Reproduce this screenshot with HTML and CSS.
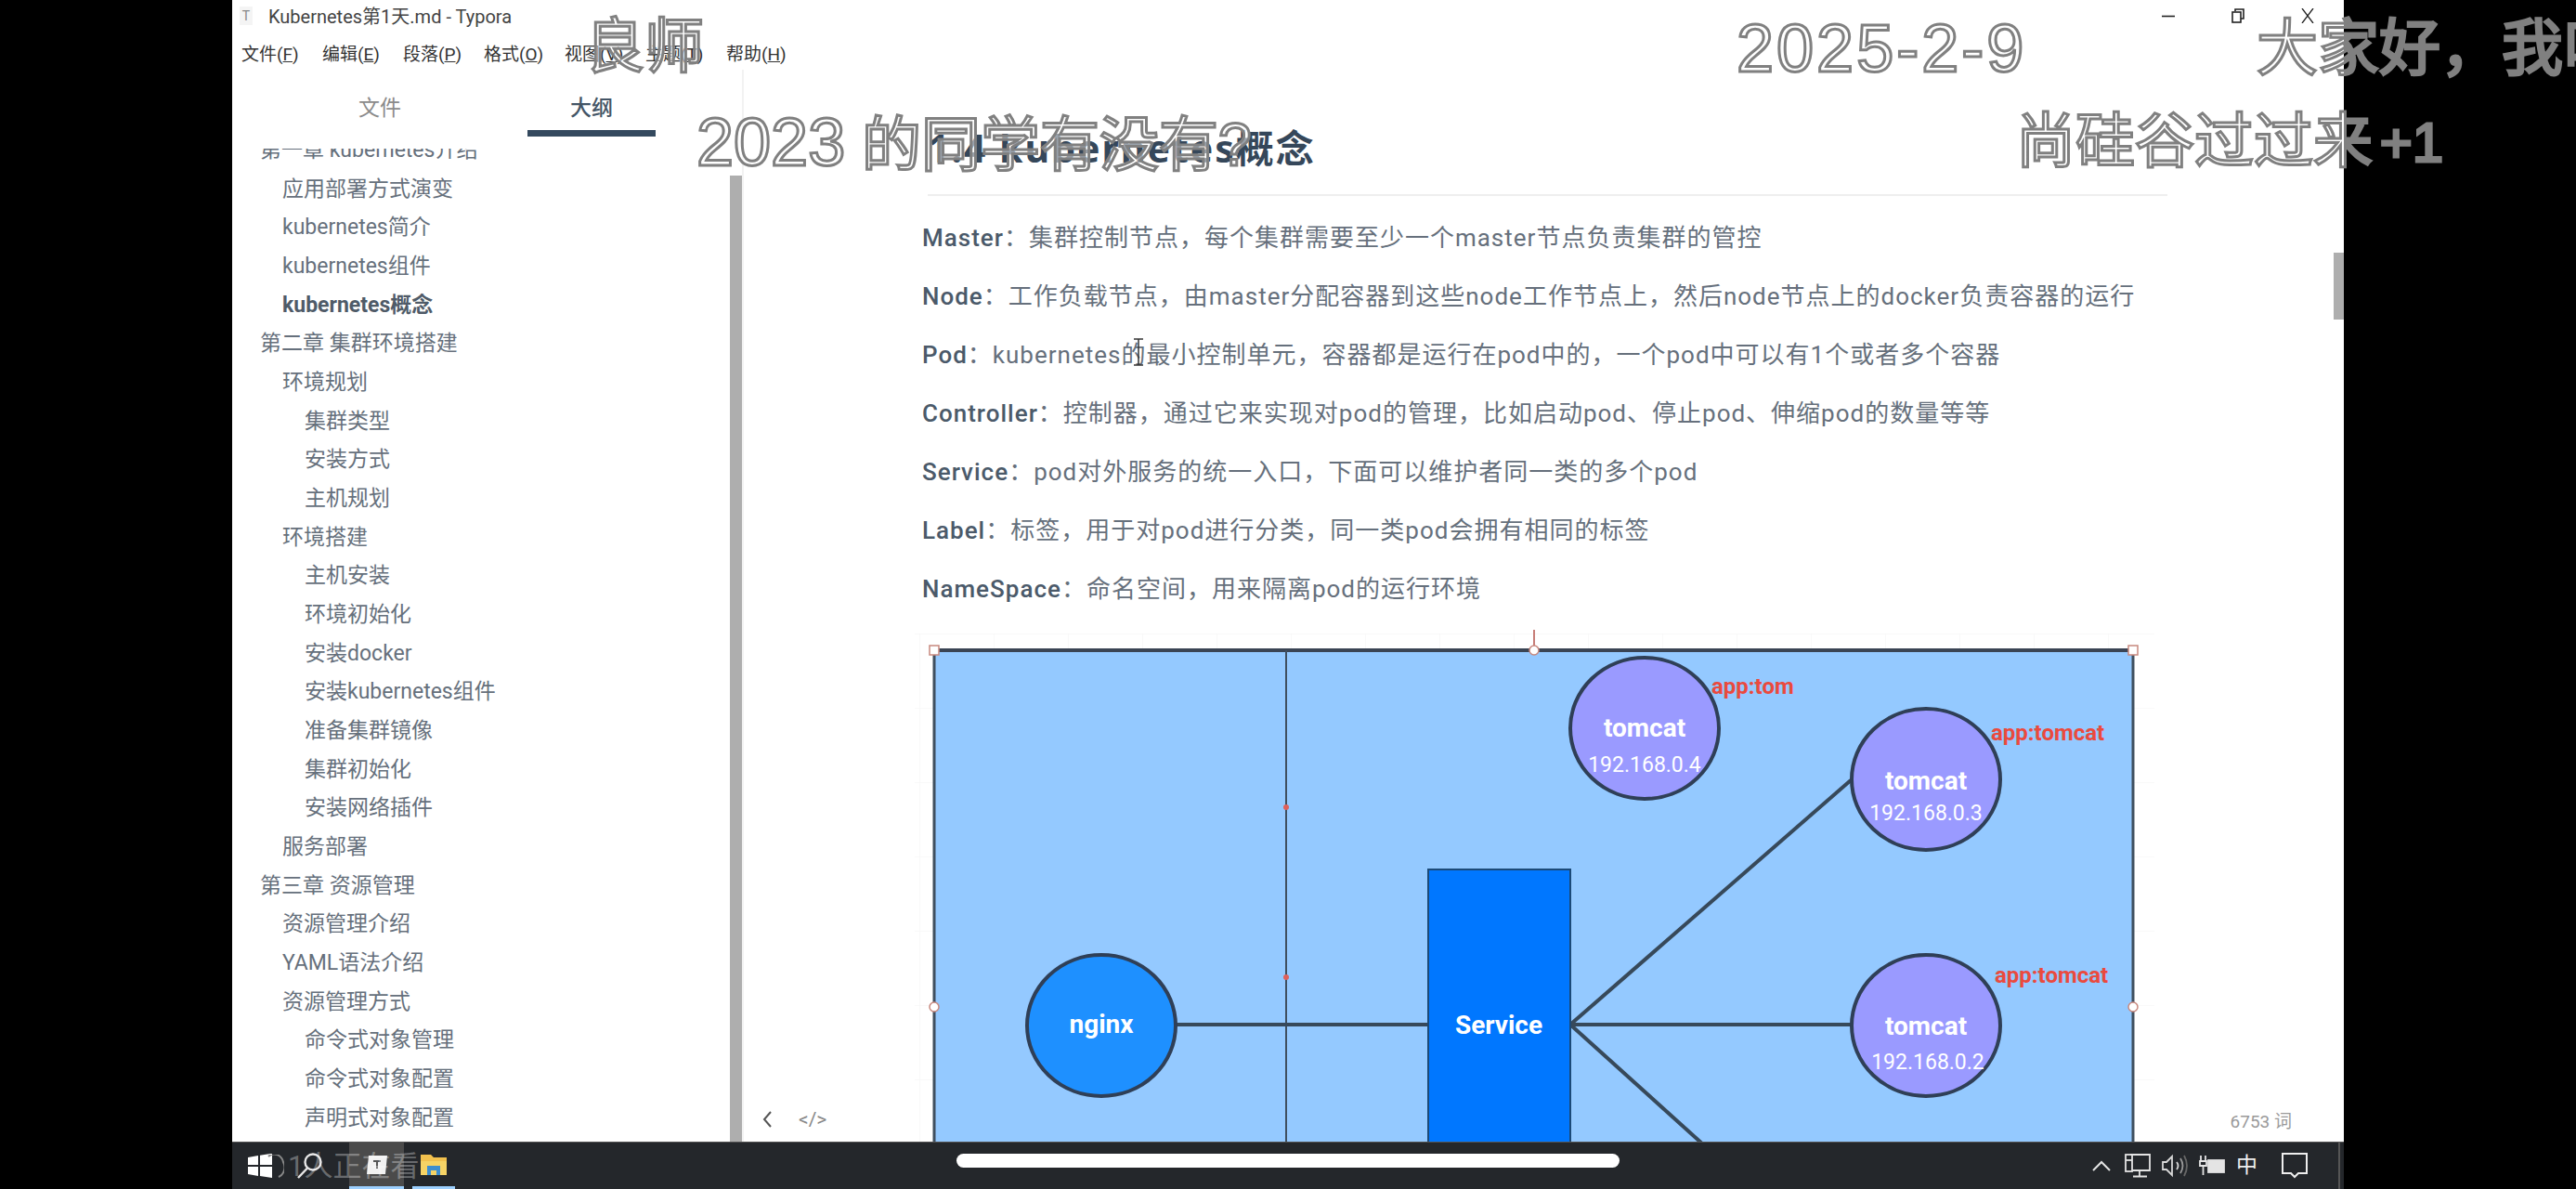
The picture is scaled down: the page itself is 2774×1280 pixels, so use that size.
FILE: index.html
```html
<!DOCTYPE html>
<html lang="zh-CN">
<head>
  <meta charset="UTF-8">
  <title>Kubernetes第1天.md - Typora</title>
  <link rel="stylesheet" href="styles.css">
</head>
<body>
  <div class="window">
    <div class="titlebar">
      <span class="app-icon">T</span>
      <span class="title">Kubernetes第1天.md - Typora</span>
      <div class="win-controls">
        <svg width="14" height="14" viewBox="0 0 14 14"><path d="M0 7.5h14" stroke="#222" stroke-width="1.6"/></svg>
        <svg width="14" height="16" viewBox="0 0 14 16" fill="none" stroke="#222" stroke-width="1.6"><path d="M4 3V1h9v10h-3"/><rect x="1" y="4" width="9" height="11"/></svg>
        <svg width="14" height="16" viewBox="0 0 14 16" fill="none" stroke="#222" stroke-width="1.3"><path d="M1 0l12 16M13 0L1 16"/></svg>
      </div>
    </div>
    <div class="menubar">
      <span>文件(<u>F</u>)</span>
      <span>编辑(<u>E</u>)</span>
      <span>段落(<u>P</u>)</span>
      <span>格式(<u>O</u>)</span>
      <span>视图(<u>V</u>)</span>
      <span>主题(<u>T</u>)</span>
      <span>帮助(<u>H</u>)</span>
    </div>

    <div class="main">
      <aside class="sidebar">
        <div class="tabs">
          <div class="tab">文件</div>
          <div class="tab active">大纲</div>
        </div>
        <div class="toc">
          <ul class="toc-list">
            <li class="l1">第一章 kubernetes介绍</li>
            <li class="l2">应用部署方式演变</li>
            <li class="l2">kubernetes简介</li>
            <li class="l2">kubernetes组件</li>
            <li class="l2 current">kubernetes概念</li>
            <li class="l1">第二章 集群环境搭建</li>
            <li class="l2">环境规划</li>
            <li class="l3">集群类型</li>
            <li class="l3">安装方式</li>
            <li class="l3">主机规划</li>
            <li class="l2">环境搭建</li>
            <li class="l3">主机安装</li>
            <li class="l3">环境初始化</li>
            <li class="l3">安装docker</li>
            <li class="l3">安装kubernetes组件</li>
            <li class="l3">准备集群镜像</li>
            <li class="l3">集群初始化</li>
            <li class="l3">安装网络插件</li>
            <li class="l2">服务部署</li>
            <li class="l1">第三章 资源管理</li>
            <li class="l2">资源管理介绍</li>
            <li class="l2">YAML语法介绍</li>
            <li class="l2">资源管理方式</li>
            <li class="l3">命令式对象管理</li>
            <li class="l3">命令式对象配置</li>
            <li class="l3">声明式对象配置</li>
          </ul>
        </div>
        <div class="side-scroll"></div>
      </aside>

      <section class="editor">
        <h2 class="doc-heading">1.4 kubernetes概念</h2>
        <p><b>Master</b>：集群控制节点，每个集群需要至少一个master节点负责集群的管控</p>
        <p><b>Node</b>：工作负载节点，由master分配容器到这些node工作节点上，然后node节点上的docker负责容器的运行</p>
        <p><b>Pod</b>：kubernetes的最小控制单元，容器都是运行在pod中的，一个pod中可以有1个或者多个容器</p>
        <p><b>Controller</b>：控制器，通过它来实现对pod的管理，比如启动pod、停止pod、伸缩pod的数量等等</p>
        <p><b>Service</b>：pod对外服务的统一入口，下面可以维护者同一类的多个pod</p>
        <p><b>Label</b>：标签，用于对pod进行分类，同一类pod会拥有相同的标签</p>
        <p><b>NameSpace</b>：命名空间，用来隔离pod的运行环境</p>

        <!-- viewBox uses page coordinates -->
        <svg class="diagram" width="1360" height="560" viewBox="980 670 1360 560">
          <defs>
            <pattern id="grid" x="990" y="680" width="80" height="80" patternUnits="userSpaceOnUse">
              <path d="M80 0H0V80" fill="none" stroke="#f3f3f3" stroke-width="1"/>
            </pattern>
          </defs>
          <rect x="985" y="680" width="1335" height="550" fill="url(#grid)"/>
          <rect class="frame" x="1006" y="698" width="1291" height="540"/>
          <path class="top-edge" d="M1006 698H2297"/>
          <path class="thin" d="M1385 698V1230"/>
          <path class="link" d="M1266 1101H1538M1691 1101H1993M1691 1101L1993 838M1691 1101L1834 1230"/>
          <rect class="service" x="1538" y="934" width="153" height="310"/>
          <ellipse class="node" cx="1771" cy="782" rx="80" ry="76"/>
          <ellipse class="node" cx="2074" cy="837" rx="80" ry="76"/>
          <ellipse class="node" cx="2074" cy="1102" rx="80" ry="76"/>
          <ellipse class="node nginx" cx="1186" cy="1102" rx="80" ry="76"/>

          <text class="name" x="1771" y="791">tomcat</text>
          <text class="ip" x="1771" y="829">192.168.0.4</text>
          <text class="name" x="2074" y="848">tomcat</text>
          <text class="ip" x="2074" y="881">192.168.0.3</text>
          <text class="name" x="2074" y="1112">tomcat</text>
          <text class="ip" x="2076" y="1149">192.168.0.2</text>
          <text class="name" x="1186" y="1110">nginx</text>
          <text class="name" x="1614" y="1111">Service</text>
          <text class="tag" x="1843" y="745">app:tom</text>
          <text class="tag" x="2144" y="795">app:tomcat</text>
          <text class="tag" x="2148" y="1056">app:tomcat</text>

          <path d="M1652 676V698" stroke="#b5524a" stroke-width="1.5"/>
          <rect class="handle" x="1001" y="693" width="10" height="10"/>
          <rect class="handle" x="2292" y="693" width="10" height="10"/>
          <ellipse class="handle" cx="1652" cy="698" rx="5" ry="5"/>
          <ellipse class="handle" cx="1006" cy="1082" rx="5" ry="5"/>
          <ellipse class="handle" cx="2297" cy="1082" rx="5" ry="5"/>
          <circle class="dot" cx="1385" cy="867" r="3"/>
          <circle class="dot" cx="1385" cy="1050" r="3"/>
        </svg>

        <div class="editor-foot">
          <div class="foot-left">
            <svg width="12" height="18" viewBox="0 0 12 18" fill="none" stroke="#555" stroke-width="2"><path d="M10 1L3 9l7 8"/></svg>
            <span class="code-toggle">&lt;/&gt;</span>
          </div>
          <span class="word-count">6753 词</span>
        </div>
        <div class="doc-scroll"></div>
      </section>
    </div>

    <div class="taskbar">
      <div class="start">
        <svg width="26" height="26" viewBox="0 0 26 26" fill="#fff"><path d="M0 4l11-2v10H0zM13 1.700l13-2V12H13zM0 14h11v10L0 22zM13 14h13v12l-13-2z"/></svg>
        <svg class="search" width="28" height="28" viewBox="0 0 28 28" fill="none" stroke="#e8e8e8" stroke-width="2.400"><circle cx="18" cy="10" r="8.500"/><path d="M12 16.500L2 27"/></svg>
      </div>
      <div class="task-btn active">
        <svg width="24" height="22" viewBox="0 0 24 22"><path d="M3 1h20l-2 20H1z" fill="#f1f1f1"/><path d="M8 7h8M12 7v8" stroke="#555" stroke-width="2" fill="none"/></svg>
      </div>
      <div class="task-btn folder">
        <svg width="28" height="26" viewBox="0 0 28 26"><path d="M0 2h11l3 3h14v6H0z" fill="#f2c14e"/><path d="M0 9h28v15H0z" fill="#f6d365"/><path d="M7 14h14v10h-4v-5h-6v5H7z" fill="#3d8ed0"/></svg>
      </div>
      <div class="tray">
        <svg class="chevron" width="20" height="12" viewBox="0 0 20 12" fill="none" stroke="#e4e4e4" stroke-width="2"><path d="M1 11l9-9 9 9"/></svg>
        <svg width="28" height="26" viewBox="0 0 28 26" fill="none" stroke="#e4e4e4" stroke-width="1.800"><path d="M6 1h21v17H8M16 18v6M9 24.500h15"/><rect x="1" y="1" width="7" height="18"/><path d="M1 7h7"/></svg>
        <svg width="28" height="26" viewBox="0 0 28 26" fill="none" stroke="#d8d8d8" stroke-width="1.800"><path d="M1 9h4l6-6v20l-6-6H1z"/><path d="M16 9q3 4 0 8"/><path d="M20 5q5 8 0 16" stroke="#999"/><path d="M24 2q6 11 0 22" stroke="#666"/></svg>
        <svg width="28" height="24" viewBox="0 0 28 24" fill="none" stroke="#e4e4e4" stroke-width="1.800"><path d="M2 1v6M7 1v6M1 7h7v5H1zM4.500 12v10"/><rect x="10" y="6" width="17" height="13" fill="#e4e4e4"/></svg>
        <span class="ime">中</span>
        <svg class="notify" width="28" height="28" viewBox="0 0 28 28" fill="none" stroke="#eee" stroke-width="2"><path d="M1 1h26v21h-9l-4 4-4-4H1z"/></svg>
        <div class="tray-edge"></div>
      </div>
    </div>
  </div>

  <!-- live stream overlays -->
  <div class="danmu d-teacher">良师</div>
  <div class="danmu d-year"><span class="digits">2023</span> 的同学有没有?</div>
  <div class="danmu d-date"><span class="digits">2025-2-9</span></div>
  <div class="danmu d-hello">大家好，我叫</div>
  <div class="danmu d-plus">尚硅谷过过来 <span class="digits">+1</span></div>

  <div class="watching">
    <svg width="18" height="26" viewBox="0 0 18 26" fill="none" stroke="#888" stroke-width="2"><path d="M1 2a10 11 0 0 1 16 6 10 11 0 0 1-5 16"/></svg>
    <span>1人正在看</span>
  </div>
  <div class="home-pill"></div>
  <svg class="cursor" width="14" height="30" viewBox="0 0 14 30" fill="none" stroke="#333" stroke-width="1.500"><path d="M2 1h10M7 1v28M2 29h10"/></svg>
</body>
</html>
```

FILE: styles.css
```css
* { box-sizing: border-box; }
html, body { margin: 0; height: 100%; }
body {
  position: relative;
  width: 2774px;
  height: 1280px;
  overflow: hidden;
  background: #000;
  font-family: Roboto, "Noto Sans CJK SC", sans-serif;
  color: #555;
}

.window { margin-left: 250px; width: 2274px; height: 1280px; display: flex; flex-direction: column; background: #fff; }

/* title + menu */
.titlebar { height: 37px; flex: none; display: flex; align-items: center; padding: 0 0 4px 8px; }
.app-icon { width: 14px; height: 20px; margin-right: 17px; background: #f4f4f4; color: #888; font-size: 14px; line-height: 20px; text-align: center; }
.title { font-size: 20px; color: #444; }
.win-controls { margin-left: auto; display: flex; align-items: center; gap: 61px; padding-right: 32px; }
.menubar { height: 38px; flex: none; display: flex; align-items: center; padding-left: 10px; font-size: 19px; color: #333; }
.menubar span { width: 87px; flex: none; }

.main { flex: 1; display: flex; min-height: 0; }

/* left outline */
.sidebar { position: relative; width: 551px; flex: none; display: flex; flex-direction: column; border-right: 2px solid #f2f2f2; }
.tabs { display: flex; height: 85px; flex: none; padding: 0 48px 13px 45px; }
.tab { flex: 1; display: flex; align-items: center; justify-content: center; font-size: 23px; color: #8b8b8b; padding-top: 6px; position: relative; }
.tab.active { color: #445566; font-weight: 500; }
.tab.active::after { content: ""; position: absolute; left: 45px; right: 45px; bottom: 0; height: 7px; background: #34495e; }
.toc { flex: 1; overflow: hidden; }
.toc-list { list-style: none; margin: -19px 0 0; padding: 0; font-size: 23px; line-height: 41.67px; color: #66707c; }
.toc-list li { white-space: nowrap; }
.l1 { padding-left: 30px; }
.l2 { padding-left: 54px; }
.l3 { padding-left: 78px; }
.toc-list .current { font-weight: 700; color: #4f5b68; }
.side-scroll { position: absolute; right: 0; top: 114px; bottom: 0; width: 13px; background: #aeaeae; }

/* document */
.editor { position: relative; flex: 1; overflow: hidden; padding-left: 192px; }
.doc-heading { margin: 0 0 14px 6px; height: 136px; width: 1335px; padding-top: 60px; font-family: "Noto Sans", "Noto Sans CJK SC", sans-serif; font-size: 41px; line-height: 48px; letter-spacing: 2px; font-weight: 700; color: #35475a; border-bottom: 2px solid #eee; white-space: nowrap; }
.editor p { margin: 0; height: 63px; font-size: 26px; line-height: 63px; letter-spacing: 1px; color: #66707c; white-space: nowrap; }
.editor p b { font-weight: 500; color: #4b5a6a; }
.diagram { display: block; margin: 6px 0 0 -13px; font-family: Roboto, sans-serif; }
.frame { fill: #94c9ff; stroke: #3f4f5f; stroke-width: 3; }
.top-edge { stroke: #3a4454; stroke-width: 4; }
.thin { stroke: #3f4f5f; stroke-width: 2; fill: none; }
.link { stroke: #37495a; stroke-width: 4; fill: none; }
.service { fill: #0077ff; stroke: #1c4a78; stroke-width: 2; }
.node { fill: #9a9aff; stroke: #2f3f57; stroke-width: 4; }
.nginx { fill: #1e90ff; }
.name { fill: #fff; font-size: 28px; font-weight: 700; text-anchor: middle; }
.ip { fill: #fff; font-size: 23px; text-anchor: middle; }
.tag { fill: #ea4a3e; font-size: 24px; font-weight: 700; }
.handle { fill: #fff; stroke: #c8897f; stroke-width: 1.5; }
.dot { fill: #e0605a; }

.editor-foot { position: absolute; left: 0; right: 0; bottom: 0; height: 48px; display: flex; align-items: center; justify-content: space-between; padding: 0 56px 0 19px; }
.foot-left { display: flex; align-items: center; gap: 28px; }
.code-toggle { font-size: 21px; color: #888; }
.word-count { font-size: 19px; color: #9a9a9a; }
.doc-scroll { position: absolute; right: 0; top: 197px; width: 11px; height: 72px; background: #aeaeae; }

/* windows taskbar */
.taskbar { height: 51px; flex: none; display: flex; align-items: center; background: #24272b; border-top: 1px solid #555; }
.start { width: 126px; flex: none; display: flex; align-items: center; padding-left: 17px; gap: 26px; }
.task-btn { height: 50px; display: flex; align-items: center; justify-content: center; border-bottom: 3px solid #9cd0ff; }
.task-btn.active { width: 59px; background: #4b4b4b; }
.task-btn.folder { width: 46px; margin-left: 9px; }
.tray { margin-left: auto; display: flex; align-items: center; gap: 12px; }
.chevron { margin-right: 3px; }
.ime { width: 20px; font-size: 23px; color: #eee; line-height: 26px; text-align: center; }
.notify { margin-left: 17px; }
.tray-edge { width: 2px; height: 50px; background: #555; margin: 0 4px 0 21px; }

/* overlays */
.danmu {
  position: absolute;
  font-family: "Liberation Sans", "Noto Sans CJK SC", sans-serif;
  font-size: 64px;
  line-height: 64px;
  white-space: nowrap;
  color: rgba(255, 255, 255, 0.5);
  -webkit-text-stroke: 3px #808080;
}
.digits { font-size: 72px; }
.d-teacher { left: 630px; top: 18px; }
.d-year { left: 750px; top: 121px; }
.d-date { left: 1870px; top: 20px; letter-spacing: 3px; }
.d-hello { left: 2430px; top: 20px; font-size: 66px; }
.d-plus { left: 2171px; top: 120px; word-spacing: -10px; }
.d-plus .digits { font-size: 60px; }

.watching { position: absolute; left: 288px; top: 1238px; display: flex; align-items: center; gap: 4px; font-size: 31px; line-height: 36px; color: rgba(255, 255, 255, 0.33); }
.home-pill { position: absolute; left: 1030px; top: 1242px; width: 714px; height: 15px; border-radius: 8px; background: #fff; }
.cursor { position: absolute; left: 1219px; top: 364px; }
```
